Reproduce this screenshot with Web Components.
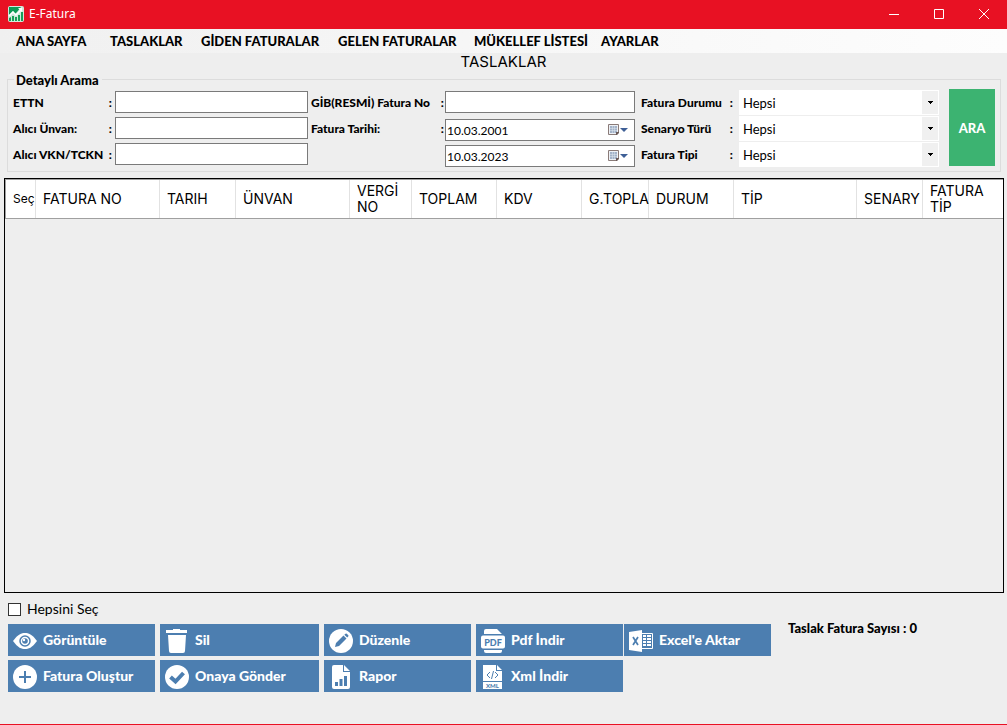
<!DOCTYPE html>
<html lang="tr">
<head>
<meta charset="utf-8">
<title>E-Fatura</title>
<style>
html, body { margin: 0; height: 100%; }
body { background: #eee; color: #000; font-family: "Lato", "Liberation Sans", sans-serif; }
</style>
</head>
<body>
<invoice-window></invoice-window>
<script>
const define = (name, html, setup) => {
  const template = document.createElement('template');
  template.innerHTML = html;
  customElements.define(name, class extends HTMLElement {
    connectedCallback() {
      if (this.shadowRoot) return;
      this.attachShadow({ mode: 'open' }).append(template.content.cloneNode(true));
      if (setup) setup(this, this.shadowRoot);
    }
  });
};

const icons = {
  eye: '<path fill="#fff" d="M0 12C5 5 8.500 4 12 4s7 1 12 8c-5 7-8.500 8-12 8S5 19 0 12z"/><circle cx="12" cy="12" r="5" fill="#fff" stroke="#4c7eb0" stroke-width="1.500"/><circle cx="12" cy="12" r="2.800" fill="#4c7eb0"/><circle cx="11" cy="11" r="1.200" fill="#fff"/>',
  trash: '<path fill="#fff" d="M1 1h7V0h7v1h7v3H1zM3 6h18l-1 16q0 2-2 2H6q-2 0-2-2z"/>',
  pencil: '<circle cx="12" cy="12" r="12" fill="#fff"/><path fill="#4c7eb0" d="M6 18l1-4 7.500-7.500 3 3L10 17zM15.300 5.700l1.200-1q.7-.5 1.300.1l1.500 1.500q.5.600-.1 1.200l-1 1.100z"/>',
  pdf: '<path fill="#fff" d="M3 5V2q0-2 2-2h11l5 5zM2 6.500h20q2 0 2 2v9q0 2-2 2H2q-2 0-2-2v-9q0-2 2-2zM3 21h18v1q0 2-2 2H5q-2 0-2-2z"/><text x="12" y="16.500" text-anchor="middle" font-family="Lato, sans-serif" font-size="9" font-weight="900" fill="#4c7eb0">PDF</text>',
  excel: '<path fill="#fff" d="M0 3l13-2v22L0 21z"/><path fill="none" stroke="#fff" d="M13 4.500h10.500v15H13"/><path stroke="#fff" stroke-width="2" d="M14 7h3m1 0h4m-8 3h3m1 0h4m-8 3h3m1 0h4m-8 3h3m1 0h4"/><path stroke="#4c7eb0" stroke-width="1.700" d="M4 8l5 8M9 8l-5 8"/>',
  plus: '<circle cx="12" cy="12" r="12" fill="#fff"/><path stroke="#4c7eb0" stroke-width="2" d="M12 6v12M6 12h12"/>',
  check: '<circle cx="12" cy="12" r="12" fill="#fff"/><path fill="none" stroke="#4c7eb0" stroke-width="4" d="M5.500 12l5 4.500L18.500 8"/>',
  report: '<path fill="#fff" d="M5 0h9v7h7v15q0 2-2 2H5q-2 0-2-2V2q0-2 2-2zM15 0l6 6h-6z"/><path fill="#4c7eb0" d="M6 17h3v4H6zM10.500 14h3v7h-3zM15 11h3v10h-3z"/>',
  xml: '<path fill="#fff" d="M2 0h13v6h6v10H2zM16 0l5 5h-5zM2 17h19v7H2z"/><path fill="none" stroke="#4c7eb0" d="M9 7l-3 3 3 3M14 7l3 3-3 3M12.500 6l-2 8"/><text x="11.500" y="23" text-anchor="middle" font-family="Lato, sans-serif" font-size="6" font-weight="900" fill="#4c7eb0">XML</text>'
};

define('title-bar', `
<style>
:host { display: flex; align-items: center; box-sizing: border-box; height: 29px; padding: 0 1px 2px 8px; background: #e81123; color: #fff; font: 12px/16px "Noto Sans", sans-serif; }
h1 { flex: 1; margin: 0 0 0 5px; font: inherit; }
svg { display: block; }
button { width: 45px; height: 27px; border: 0; padding: 0; background: none; display: grid; place-items: center; }
</style>
<svg width="16" height="16" viewBox="0 0 16 16" aria-hidden="true"><rect width="16" height="16" rx="2" fill="#cfe9dc"/><path fill="#0c9a56" d="M1 1h12L9 6 7 8 5 5 1 9z"/><path fill="#18a058" d="M1 15v-3l2-1v4zM4 15v-5h2v5zM7 15v-4h2v4zM10 15V9h2v6zM13 15V6h2v9z"/><path fill="none" stroke="#fff" stroke-width="1.500" d="M1 10l4-4 3 3 5-5"/><path fill="#fff" d="M10 2h4v4z"/></svg>
<h1>E-Fatura</h1>
<button aria-label="Simge durumuna küçült"><svg width="10" height="10" stroke="#fff"><path d="M0 5.500h10"/></svg></button>
<button aria-label="Ekranı kapla"><svg width="10" height="10" fill="none" stroke="#fff"><path d="M.5.500h9v9h-9z"/></svg></button>
<button aria-label="Kapat"><svg width="10" height="10" stroke="#fff"><path d="M0 0l10 10M10 0L0 10"/></svg></button>`);

define('menu-bar', `
<style>
:host { display: block; height: 24px; background: linear-gradient(90deg, #f0f0f0, #fdfdfd); }
nav { display: grid; grid-template-columns: 94px 91px 137px 136px 127px auto; padding: 0 16px; font-size: 13px; font-weight: 900; line-height: 25px; white-space: nowrap; }
::slotted(a) { color: #000; text-decoration: none; }
</style>
<nav><slot></slot></nav>`);

const fieldStyle = `
:host { display: grid; grid-template-columns: var(--lead) minmax(0, 1fr); height: 25px; font-size: 12px; }
label { display: flex; justify-content: space-between; padding-right: var(--colon-gap); font-weight: 900; line-height: 25px; white-space: nowrap; }
input, select { box-sizing: border-box; width: 100%; border: 0; border-radius: 0; margin: 0; color: #000; background: #fff; font: 13px "Lato", sans-serif; }`;

define('text-field', `
<style>${fieldStyle}
input { height: 22px; margin-top: 1px; border: 1px solid #7a7a7a; }
</style>
<label for="box"><span></span><span>:</span></label><input id="box" type="text">`,
(host, root) => { root.querySelector('span').textContent = host.getAttribute('label'); });

define('date-field', `
<style>${fieldStyle}
.box { display: flex; align-items: center; align-self: end; box-sizing: border-box; height: 22px; padding-right: 5px; border: 1px solid #7a7a7a; background: #fff; }
input { flex: 1; min-width: 0; height: 20px; padding: 0 1px; font-size: 12px; }
button { display: flex; border: 0; padding: 0; background: none; }
</style>
<label for="box"><span></span><span>:</span></label>
<div class="box"><input id="box" type="text"><button aria-label="Takvimi aç"><svg width="22" height="14" viewBox="0 0 22 14"><path fill="#eef1f6" stroke="#8a7b78" d="M1.500 1.500h10v8l-2 2h-8z"/><path fill="#a3b3c9" d="M3 3h7v7H3z"/><path stroke="#dfe6ef" stroke-width=".5" d="M3 5.500h7M3 7.500h7M5.500 3v7M7.500 3v7"/><path fill="#6b5b59" d="M9 9h3v1l-2 2H9z"/><path fill="#3e5f96" d="M13 5h8l-4 4z"/></svg></button></div>`,
(host, root) => {
  const input = root.querySelector('input');
  input.value = host.getAttribute('value');
  if (host.hasAttribute('label')) root.querySelector('span').textContent = host.getAttribute('label');
  else { root.querySelector('label').textContent = ''; input.setAttribute('aria-label', 'Bitiş tarihi'); }
});

define('select-field', `
<style>${fieldStyle}
.box { display: grid; }
.box > * { grid-area: 1 / 1; }
select { appearance: none; height: 25px; padding: 0 20px 0 4px; }
svg { justify-self: end; margin: 1px; pointer-events: none; }
</style>
<label for="box"><span></span><span>:</span></label>
<div class="box"><select id="box"><option>Hepsi</option></select><svg width="16" height="23" viewBox="0 0 16 23" aria-hidden="true"><path fill="#f0f0f0" d="M0 0h16v23H0z"/><path d="M6 10h5v1H6zM7 11h3v1H7zM8 12h1v1H8z"/></svg></div>`,
(host, root) => { root.querySelector('span').textContent = host.getAttribute('label'); });

define('search-panel', `
<style>
:host { display: block; padding: 0 6px 0 7px; }
fieldset { display: grid; grid-template-columns: 295fr 327fr 304fr 56px; align-items: start; min-width: 0; margin: 0; padding: 1px 5px 4px; border: 1px solid #dcdcdc; }
legend { margin-left: 1px; padding: 2px 3px 0 2px; font-size: 13px; font-weight: 900; line-height: 16px; }
.group { display: grid; gap: 1px; margin-top: 1px; }
.buyer { --lead: 102px; --colon-gap: 3px; }
.invoice { --lead: 134px; --colon-gap: 1px; margin-left: 3px; }
.kind { --lead: 98px; --colon-gap: 6px; margin-left: 6px; }
button { height: 77px; margin: 0 0 0 10px; width: 46px; padding: 0; border: 0; background: #3cb371; color: #fff; font: 900 13px "Lato", sans-serif; }
</style>
<fieldset>
<legend>Detaylı Arama</legend>
<div class="group buyer"><text-field label="ETTN"></text-field><text-field label="Alıcı Ünvan:"></text-field><text-field label="Alıcı VKN/TCKN"></text-field></div>
<div class="group invoice"><text-field label="GİB(RESMİ) Fatura No"></text-field><date-field label="Fatura Tarihi:" value="10.03.2001"></date-field><date-field value="10.03.2023"></date-field></div>
<div class="group kind"><select-field label="Fatura Durumu"></select-field><select-field label="Senaryo Türü"></select-field><select-field label="Fatura Tipi"></select-field></div>
<button>ARA</button>
</fieldset>`);

define('invoice-table', `
<style>
:host { display: block; box-sizing: border-box; border: 1px solid #000; overflow: hidden; }
table { width: 100%; table-layout: fixed; border-collapse: separate; border-spacing: 0; }
th { box-sizing: border-box; height: 40px; padding: 0 0 0 7px; border: solid #a0a0a0; border-width: 1px 0; background: linear-gradient(#e2e2e2, #e2e2e2) right / 1px 100% no-repeat #fff; overflow: hidden; text-align: left; font: 14px/16px "Inter", sans-serif; }
th:first-child { border-left-width: 1px; font-size: 12px; }
th:last-child { background: #fff; }
</style>
<table><colgroup></colgroup><thead><tr></tr></thead><tbody></tbody></table>`,
(host, root) => {
  const columns = [['Seç', 31], ['FATURA NO', 124], ['TARIH', 76], ['ÜNVAN', 114], ['VERGİ NO', 62], ['TOPLAM', 85], ['KDV', 85], ['G.TOPLA', 67], ['DURUM', 85], ['TİP', 123], ['SENARY', 66], ['FATURA TİP', 80]];
  for (const [name, width] of columns) {
    const col = document.createElement('col');
    col.style.width = width + 'px';
    root.querySelector('colgroup').append(col);
    const th = document.createElement('th');
    th.scope = 'col';
    th.textContent = name;
    root.querySelector('tr').append(th);
  }
});

define('action-button', `
<style>
:host { display: block; }
button { display: flex; align-items: center; gap: 6px; width: 100%; height: 32px; padding: 2px 5px 0; border: 0; background: #4c7eb0; color: #fff; font: 900 14px/16px "Lato", sans-serif; white-space: nowrap; }
svg { flex: none; }
span { padding-bottom: 2px; }
</style>
<button><svg width="24" height="24" viewBox="0 0 24 24" aria-hidden="true"></svg><span><slot></slot></span></button>`,
(host, root) => { root.querySelector('svg').innerHTML = icons[host.getAttribute('icon')]; });

define('action-bar', `
<style>
:host { display: block; padding: 0 8px 32px; }
.all { display: flex; align-items: center; gap: 6px; height: 31px; padding-top: 2px; box-sizing: border-box; font-size: 14px; line-height: 16px; }
.all label { padding-bottom: 2px; }
input { appearance: none; box-sizing: border-box; width: 13px; height: 13px; margin: 0; border: 1px solid #333; background: #fff; }
.row { display: flex; align-items: start; gap: 13px; }
.actions { display: grid; grid-template-columns: 147px 159px 147px 147px 147px; gap: 4px 5px; }
.actions > :nth-child(5) { margin: 0 4px 0 -4px; }
output { font-size: 13px; font-weight: 900; line-height: 16px; margin-top: -4px; }
</style>
<div class="all"><input type="checkbox" id="all"><label for="all">Hepsini Seç</label></div>
<div class="row">
<div class="actions">
<action-button icon="eye">Görüntüle</action-button>
<action-button icon="trash">Sil</action-button>
<action-button icon="pencil">Düzenle</action-button>
<action-button icon="pdf">Pdf İndir</action-button>
<action-button icon="excel">Excel'e Aktar</action-button>
<action-button icon="plus">Fatura Oluştur</action-button>
<action-button icon="check">Onaya Gönder</action-button>
<action-button icon="report">Rapor</action-button>
<action-button icon="xml">Xml İndir</action-button>
</div>
<output>Taslak Fatura Sayısı : 0</output>
</div>`);

define('invoice-window', `
<style>
:host { display: flex; flex-direction: column; box-sizing: border-box; min-height: 100vh; border-bottom: 1px solid #e81123; }
h2 { margin: 0; height: 17px; text-align: center; font: 15px/18px "Inter", sans-serif; }
invoice-table { flex: 1; margin: 6px 3px 0 4px; }
</style>
<title-bar></title-bar>
<menu-bar><a href="#">ANA SAYFA</a><a href="#">TASLAKLAR</a><a href="#">GİDEN FATURALAR</a><a href="#">GELEN FATURALAR</a><a href="#">MÜKELLEF LİSTESİ</a><a href="#">AYARLAR</a></menu-bar>
<h2>TASLAKLAR</h2>
<search-panel></search-panel>
<invoice-table></invoice-table>
<action-bar></action-bar>`);
</script>
</body>
</html>
